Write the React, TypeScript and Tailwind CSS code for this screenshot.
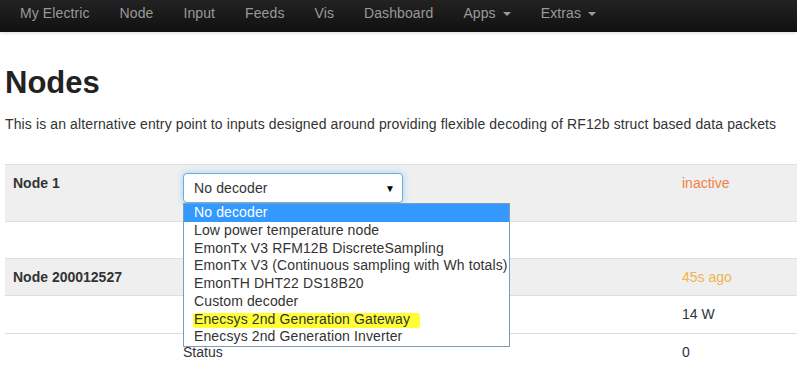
import React from "react";

const navItems = [
  { label: "My Electric" },
  { label: "Node" },
  { label: "Input" },
  { label: "Feeds" },
  { label: "Vis" },
  { label: "Dashboard" },
  { label: "Apps", caret: true },
  { label: "Extras", caret: true },
];

const options = [
  "No decoder",
  "Low power temperature node",
  "EmonTx V3 RFM12B DiscreteSampling",
  "EmonTx V3 (Continuous sampling with Wh totals)",
  "EmonTH DHT22 DS18B20",
  "Custom decoder",
  "Enecsys 2nd Generation Gateway",
  "Enecsys 2nd Generation Inverter",
];

export default function App() {
  return (
    <div
      className="w-[797px] h-[369px] overflow-hidden bg-white text-[14px] text-[#333]"
      style={{ fontFamily: '"Liberation Sans", Arial, sans-serif' }}
    >
      {/* Navbar */}
      <div className="h-[32px] bg-gradient-to-b from-[#222] to-[#111] flex pl-[5px] shadow-[0_1px_3px_rgba(0,0,0,0.15)]">
        {navItems.map((n) => (
          <div
            key={n.label}
            className="px-[15px] pt-[3px] leading-[20px] text-[#999] flex items-start tracking-[0.1px]"
          >
            <span>{n.label}</span>
            {n.caret && (
              <span className="inline-block ml-[7px] mt-[9px] w-0 h-0 border-l-[4px] border-r-[4px] border-t-[4px] border-l-transparent border-r-transparent border-t-[#999]" />
            )}
          </div>
        ))}
      </div>

      <div className="pl-[5px]">
        <h1 className="mt-[33px] text-[31px] leading-[36px] font-bold text-[#222]">Nodes</h1>
        <p className="mt-[13px] leading-[20px] tracking-[0.12px]">
          This is an alternative entry point to inputs designed around providing flexible decoding of RF12b struct based data packets
        </p>

        <div className="mt-[30px] relative">
          {/* Row 1 */}
          <div className="flex border-t border-[#ddd] bg-[#efefef]">
            <div className="w-[170px] p-[8px] font-bold leading-[20px]">Node 1</div>
            <div className="w-[499px] p-[8px]">
              <div className="w-[220px] h-[30px] mb-[10px] rounded-[4px] border border-[#66afe9] bg-white shadow-[0_0_6px_rgba(102,175,233,0.5)] flex items-center justify-between pl-[10px] pr-[7px]">
                <span className="leading-[20px] tracking-[0.12px]">No decoder</span>
                <span className="text-[10px] text-black">▼</span>
              </div>
            </div>
            <div className="flex-1 p-[8px] leading-[20px] text-[#f0823f]">inactive</div>
          </div>
          {/* Row 2 */}
          <div className="flex border-t border-[#ddd]">
            <div className="p-[8px] h-[36px]" />
          </div>
          {/* Row 3 */}
          <div className="flex border-t border-[#ddd] bg-[#efefef]">
            <div className="w-[170px] p-[8px] font-bold leading-[20px]">Node 200012527</div>
            <div className="w-[499px] p-[8px]" />
            <div className="flex-1 p-[8px] leading-[20px] text-[#f0b450]">45s ago</div>
          </div>
          {/* Row 4 */}
          <div className="flex border-t border-[#ddd]">
            <div className="w-[170px] p-[8px] h-[37px]" />
            <div className="w-[499px] p-[8px]" />
            <div className="flex-1 p-[8px] leading-[20px]">14 W</div>
          </div>
          {/* Row 5 */}
          <div className="flex border-t border-[#ddd]">
            <div className="w-[170px] p-[8px]" />
            <div className="w-[499px] p-[8px] leading-[20px]">Status</div>
            <div className="flex-1 p-[8px] leading-[20px]">0</div>
          </div>

          {/* Open select dropdown */}
          <div className="absolute left-[178px] top-[39px] w-[327px] border border-[#7f9db9] bg-white">
            {options.map((o, i) => (
              <div
                key={o}
                className={
                  "relative h-[17.75px] leading-[17.75px] pl-[10px] whitespace-nowrap tracking-[0.12px] " +
                  (i === 0 ? "bg-[#3399ff] text-white" : "text-[#333]")
                }
              >
                {i === 6 && (
                  <span className="absolute left-[9px] top-[2px] w-[227px] h-[15px] bg-[#ffff33] rounded-[3px]" />
                )}
                <span className="relative">{o}</span>
              </div>
            ))}
          </div>
        </div>
      </div>
    </div>
  );
}
